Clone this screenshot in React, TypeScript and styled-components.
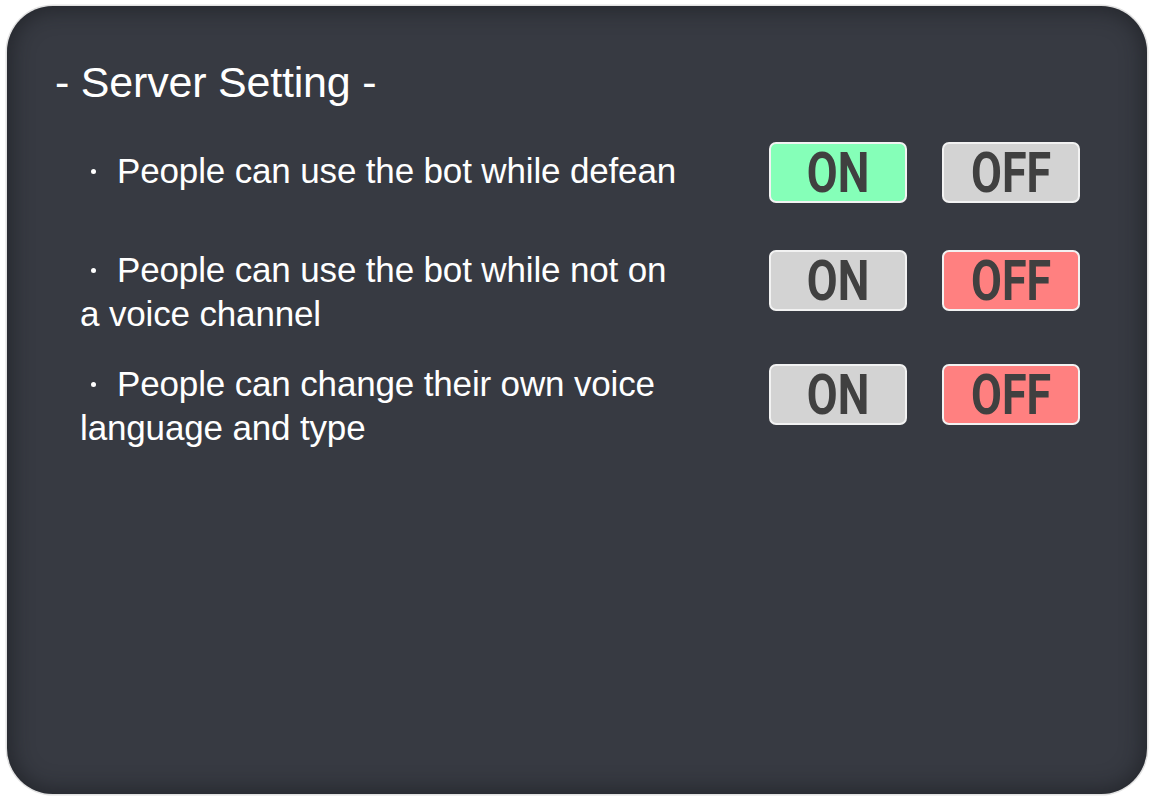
import React from "react";
import styled, { createGlobalStyle } from "styled-components";

const Global = createGlobalStyle`
  html, body {
    margin: 0;
    padding: 0;
    background: #ffffff;
  }
`;

const Page = styled.div`
  width: 1153px;
  height: 800px;
  padding: 6px 6px 6px 7px;
  box-sizing: border-box;
  background: #ffffff;
`;

const Panel = styled.section`
  width: 100%;
  height: 100%;
  box-sizing: border-box;
  border-radius: 46px;
  background: #373a42;
  box-shadow: 0 0 0 1.5px #e2e2e2, inset 0 0 20px 5px rgba(20, 21, 25, 0.5);
  padding: 55px 67px 0 48px;
  font-family: "Liberation Sans", Arial, sans-serif;
  color: #ffffff;
`;

const Title = styled.h1`
  margin: 0 0 38px 0;
  font-size: 43px;
  line-height: 1;
  font-weight: 400;
  letter-spacing: -0.2px;
`;

const Row = styled.div<{ $gap: number }>`
  display: flex;
  align-items: flex-start;
  justify-content: space-between;
  height: 60px;
  margin-top: ${(p) => p.$gap}px;
`;

// bullet drawn as a small dot before the first line
const Label = styled.p<{ $shift: number }>`
  margin: ${(p) => p.$shift}px 0 0 25px;
  width: 608px;
  font-size: 35px;
  line-height: 44px;
  font-weight: 400;
  letter-spacing: -0.15px;

  &::before {
    content: "";
    display: inline-block;
    width: 5px;
    height: 5px;
    border-radius: 50%;
    background: #ffffff;
    margin: 0 21px 0 11px;
    vertical-align: 9px;
  }
`;

const Buttons = styled.div`
  display: flex;
  gap: 35px;
`;

const Toggle = styled.button<{ $tone: "green" | "red" | "gray" }>`
  width: 138px;
  height: 61px;
  box-sizing: border-box;
  border: 2px solid #f2f2f2;
  border-radius: 7px;
  padding: 0;
  display: flex;
  align-items: center;
  justify-content: center;
  background: ${(p) =>
    p.$tone === "green" ? "#85ffb8" : p.$tone === "red" ? "#ff8080" : "#d3d3d3"};
  color: #404040;
  font-family: Roboto, "Liberation Sans", sans-serif;
  font-weight: 700;
  font-size: 56px;
  line-height: 1;
  cursor: pointer;
`;

const Caps = styled.span`
  display: inline-block;
  transform: scaleX(0.8);
`;

type Setting = { text: string; on: boolean; gap: number; shift: number };

const settings: Setting[] = [
  { text: "People can use the bot while defean", on: true, gap: 0, shift: 7 },
  { text: "People can use the bot while not on a voice channel", on: false, gap: 48, shift: -2 },
  { text: "People can change their own voice language and type", on: false, gap: 54, shift: -2 },
];

function SettingRow({ s }: { s: Setting }) {
  return (
    <Row $gap={s.gap}>
      <Label $shift={s.shift}>{s.text}</Label>
      <Buttons>
        <Toggle $tone={s.on ? "green" : "gray"}>
          <Caps>ON</Caps>
        </Toggle>
        <Toggle $tone={s.on ? "gray" : "red"}>
          <Caps>OFF</Caps>
        </Toggle>
      </Buttons>
    </Row>
  );
}

export default function App() {
  return (
    <Page>
      <Global />
      <Panel>
        <Title>- Server Setting -</Title>
        {settings.map((s) => (
          <SettingRow key={s.text} s={s} />
        ))}
      </Panel>
    </Page>
  );
}
